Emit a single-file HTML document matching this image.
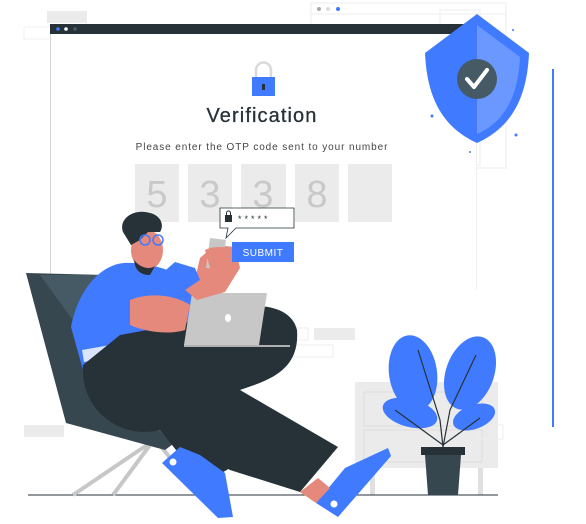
<!DOCTYPE html>
<html><head><meta charset="utf-8"><style>
html,body{margin:0;padding:0;background:#fff;width:586px;height:524px;overflow:hidden}
svg{display:block}
text{font-family:"Liberation Sans",sans-serif}
</style></head><body>
<svg width="586" height="524" viewBox="0 0 586 524" xmlns="http://www.w3.org/2000/svg">
<rect x="47" y="11" width="40" height="12" fill="#ebebeb"/>
<rect x="24" y="27" width="27" height="12" fill="none" stroke="#f0f0f0"/>
<rect x="311" y="3" width="195" height="165" fill="#fff" stroke="#ececec"/>
<line x1="311" y1="14" x2="506" y2="14" stroke="#ececec"/>
<circle cx="319" cy="9" r="2" fill="#aaa"/><circle cx="328" cy="9" r="2" fill="#ddd"/><circle cx="338" cy="9" r="2" fill="#407bff"/>
<rect x="440" y="10" width="40" height="155" fill="none" stroke="#eee"/>
<!-- main window -->
<rect x="50" y="24" width="427" height="320" fill="#fff"/>
<line x1="50.5" y1="34" x2="50.5" y2="300" stroke="#d6d6d6"/>
<line x1="476.5" y1="34" x2="476.5" y2="290" stroke="#eee"/>
<rect x="50" y="24" width="420" height="10" fill="#263238"/>
<circle cx="58" cy="29" r="1.8" fill="#407bff"/><circle cx="66" cy="29" r="1.8" fill="#fff"/><circle cx="75" cy="29" r="1.8" fill="#455a64"/>
<path d="M256 78 V70 a7.5 7.5 0 0 1 15 0 V78" fill="none" stroke="#d9d9d9" stroke-width="2.5"/>
<rect x="252" y="77" width="23" height="19" fill="#407bff"/>
<rect x="262" y="84" width="3" height="6" fill="#263238"/>
<text x="262" y="122" text-anchor="middle" font-size="20" letter-spacing="1.1" fill="#263238" stroke="#263238" stroke-width="0.3">Verification</text>
<text x="262" y="150" text-anchor="middle" font-size="10" letter-spacing="0.9" fill="#444">Please enter the OTP code sent to your number</text>
<g fill="#ebebeb">
<rect x="135" y="164" width="44" height="58"/><rect x="188" y="164" width="44" height="58"/><rect x="241" y="164" width="45" height="58"/><rect x="295" y="164" width="44" height="58"/><rect x="348" y="164" width="44" height="58"/>
</g>
<g font-size="38" fill="#c9c9c9" text-anchor="middle">
<text x="157" y="207">5</text><text x="210" y="207">3</text><text x="263" y="207">3</text><text x="317" y="207">8</text>
</g>
<rect x="269" y="328" width="39" height="12" fill="#fff" stroke="#eee"/>
<rect x="314" y="328" width="41" height="12" fill="#ebebeb"/>
<rect x="289" y="345" width="44" height="12" fill="#fff" stroke="#eee"/>
<rect x="24" y="425" width="40" height="12" fill="#ebebeb"/>
<rect x="355" y="382" width="143" height="86" fill="#ebebeb"/>
<rect x="364" y="392" width="118" height="34" fill="none" stroke="#ddd"/>
<rect x="364" y="430" width="118" height="32" fill="none" stroke="#ddd"/>
<rect x="370" y="468" width="5" height="27" fill="#e0e0e0"/><rect x="478" y="468" width="5" height="27" fill="#e0e0e0"/>
<rect x="478" y="425" width="25" height="14" fill="none" stroke="#eee"/>
<rect x="552" y="69" width="2" height="358" fill="#407bff"/>
<!-- shield -->
<path d="M477 14 L529 53 C527 100 510 128 477 143 C444 128 427 100 425 53 Z" fill="#407bff"/>
<path d="M477 25 L520 57 C518 98 504 122 477 134 Z" fill="#6b98ff"/>
<circle cx="477" cy="79" r="20" fill="#455a64"/>
<path d="M467 79 L474 87 L487 70" fill="none" stroke="#fff" stroke-width="4" stroke-linecap="round" stroke-linejoin="round"/>
<g fill="#407bff"><circle cx="432" cy="116" r="1.5"/><circle cx="516" cy="135" r="1.5"/><circle cx="470" cy="152" r="1"/><circle cx="513" cy="30" r="1"/></g>
<line x1="28" y1="495" x2="498" y2="495" stroke="#263238" stroke-width="1"/>
<g stroke="#c7c7c7" stroke-width="4"><line x1="147" y1="445" x2="73" y2="495"/><line x1="150" y1="445" x2="113" y2="495"/><line x1="160" y1="445" x2="195" y2="490"/></g>
<polygon points="26,273 105,275 150,380 192,430 165,450 66,423" fill="#37474f"/>
<polygon points="40,275 105,275 150,380 192,430 170,440 110,390 80,330" fill="#455a64"/>
<!-- plant -->
<g fill="#407bff">
<ellipse cx="413" cy="373" rx="24" ry="38" transform="rotate(-8 413 373)"/>
<ellipse cx="470" cy="373" rx="24" ry="38" transform="rotate(20 470 373)"/>
<ellipse cx="410" cy="413" rx="28" ry="14" transform="rotate(15 410 413)"/>
<ellipse cx="474" cy="417" rx="22" ry="12" transform="rotate(-20 474 417)"/>
</g>
<g stroke="#263238" stroke-width="1.2" fill="none"><path d="M443 447 L440 420 L418 350"/><path d="M443 447 L450 410 L476 355"/><path d="M443 445 L395 410"/><path d="M443 445 L480 418"/></g>
<rect x="421" y="447" width="44" height="8" fill="#263238"/>
<polygon points="425,455 461,455 458,495 428,495" fill="#37474f"/>
<!-- torso -->
<path d="M124 263 C100 265 78 290 71 327 L83 370 L200 345 L210 290 L195 282 C170 270 150 262 124 263 Z" fill="#407bff"/>
<path d="M82 350 L150 338 L152 348 L84 362 Z" fill="#fff" opacity=".8"/>
<!-- legs -->
<path d="M83 365 C80 410 120 440 160 430 L230 470 L300 492 L338 447 L240 390 C270 380 300 370 297 330 C290 300 240 300 200 320 L120 335 Z" fill="#263238"/>
<path d="M160 430 L200 440 L235 465 L210 480 L180 455 Z" fill="#263238"/>
<!-- shoes -->
<polygon points="162,463 180,447 200,455 225,473 233,517 218,518" fill="#407bff"/>
<circle cx="173" cy="462" r="3.5" fill="#fff"/>
<polygon points="316,503 345,468 388,448 391,456 338,517" fill="#407bff"/>
<circle cx="334" cy="504" r="3.5" fill="#fff"/>
<polygon points="300,492 316,503 330,488 318,478" fill="#e4897b"/>
<!-- laptop -->
<polygon points="192,293 267,293 259,345 184,345" fill="#c7c7c7"/>
<polygon points="184,345 259,345 290,345 290,347 184,347" fill="#b0b0b0"/>
<ellipse cx="228" cy="318" rx="3" ry="4" fill="#fff"/>
<!-- hands -->
<path d="M130 300 C150 292 175 295 190 305 L185 330 C170 335 145 332 130 325 Z" fill="#e4897b"/>
<path d="M177 283 L197 300 L225 292 L240 268 L235 247 L215 245 L200 258 L196 275 Z" fill="#e4897b"/>
<path d="M160 275 L185 290 L200 280 L195 268 L175 262 Z" fill="#407bff"/>
<polygon points="210,238 226,240 222,270 206,268" fill="#c7c7c7"/>
<path d="M205 250 C215 245 235 246 240 255 L236 272 L212 275 Z" fill="#e4897b"/>
<!-- head -->
<ellipse cx="147" cy="250" rx="16" ry="20" fill="#e4897b"/>
<path d="M123 232 C118 218 135 208 150 213 C162 216 164 226 160 232 L148 232 L140 240 L131 245 Z" fill="#263238"/>
<path d="M134 260 C140 268 150 270 155 266 L150 275 C140 275 135 270 134 260 Z" fill="#263238"/>
<circle cx="145" cy="240" r="5" fill="none" stroke="#407bff" stroke-width="1.5"/>
<circle cx="158" cy="240" r="5" fill="none" stroke="#407bff" stroke-width="1.5"/>
<!-- bubble -->
<path d="M220 208 H294 V228 H236 L226 238 L228 228 H220 Z" fill="#fff" stroke="#263238" stroke-width="0.8"/>
<rect x="225" y="215" width="7" height="7" fill="#263238"/>
<path d="M226.5 215 v-2 a2 2 0 0 1 4 0 v2" fill="none" stroke="#263238" stroke-width="1"/>
<text x="238" y="222" font-size="9" fill="#263238" letter-spacing="3">*****</text>
<rect x="232" y="242" width="62" height="20" fill="#407bff"/>
<text x="263" y="256" text-anchor="middle" font-size="10" fill="#fff" letter-spacing="0.5">SUBMIT</text>
</svg>
</body></html>
